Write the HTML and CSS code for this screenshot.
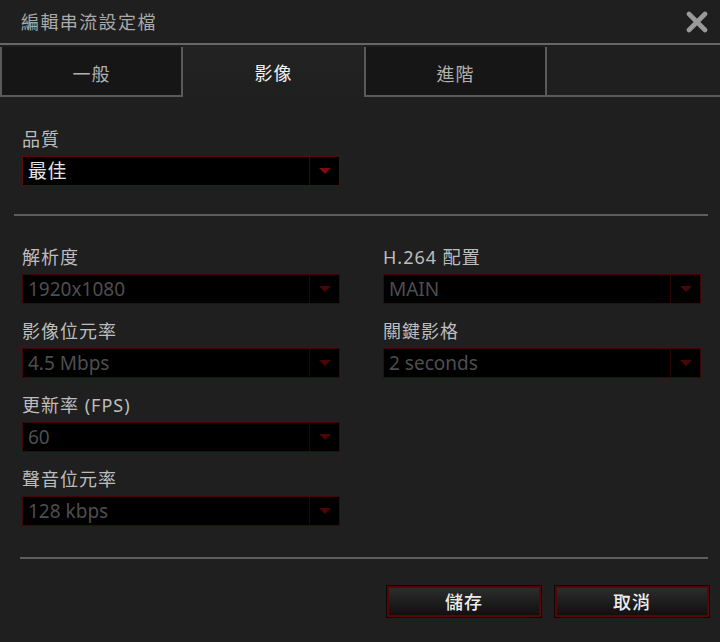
FILE: index.html
```html
<!DOCTYPE html>
<html lang="zh-Hant">
<head>
<meta charset="utf-8">
<title>編輯串流設定檔</title>
<link rel="stylesheet" href="styles.css">
</head>
<body>
<div class="dialog">
  <header class="titlebar">
    <span class="title">編輯串流設定檔</span>
    <button class="close" aria-label="close">
      <svg width="22" height="22" viewBox="0 0 22 22"><path d="M3 3 L19 19 M19 3 L3 19" stroke="#9a9a9a" stroke-width="4.6" stroke-linecap="round" fill="none"/></svg>
    </button>
  </header>

  <nav class="tabs">
    <div class="tab tab-first">一般</div>
    <div class="tab active">影像</div>
    <div class="tab">進階</div>
    <div class="tab-rest"></div>
  </nav>

  <section class="quality">
    <div class="field">
      <div class="label">品質</div>
      <div class="select enabled"><span class="value">最佳</span><span class="arrow"><i></i></span></div>
    </div>
  </section>

  <div class="divider divider-top"></div>

  <section class="grid">
    <div class="col">
      <div class="field">
        <div class="label">解析度</div>
        <div class="select"><span class="value">1920x1080</span><span class="arrow"><i></i></span></div>
      </div>
      <div class="field">
        <div class="label">影像位元率</div>
        <div class="select"><span class="value">4.5 Mbps</span><span class="arrow"><i></i></span></div>
      </div>
      <div class="field">
        <div class="label">更新率 (FPS)</div>
        <div class="select"><span class="value">60</span><span class="arrow"><i></i></span></div>
      </div>
      <div class="field">
        <div class="label">聲音位元率</div>
        <div class="select"><span class="value">128 kbps</span><span class="arrow"><i></i></span></div>
      </div>
    </div>
    <div class="col">
      <div class="field">
        <div class="label">H.264 配置</div>
        <div class="select"><span class="value">MAIN</span><span class="arrow"><i></i></span></div>
      </div>
      <div class="field">
        <div class="label">關鍵影格</div>
        <div class="select"><span class="value">2 seconds</span><span class="arrow"><i></i></span></div>
      </div>
    </div>
  </section>

  <div class="divider divider-bottom"></div>

  <footer class="actions">
    <button class="btn">儲存</button>
    <button class="btn">取消</button>
  </footer>
</div>
</body>
</html>
```
FILE: styles.css
```css
* { box-sizing: border-box; }
html, body {
  margin: 0;
  padding: 0;
  background: #1f1f1f;
}
body {
  width: 720px;
  height: 642px;
  overflow: hidden;
  font-family: "Noto Sans", "Noto Sans CJK TC", sans-serif;
  color: #b8b8b8;
}
.dialog {
  width: 720px;
  height: 642px;
}
.titlebar {
  height: 45px;
  border-bottom: 2px solid #676767;
  display: flex;
  align-items: center;
  justify-content: space-between;
  padding: 0 12px 0 21px;
}
.title {
  font-size: 18px;
  letter-spacing: 1.4px;
  color: #a9a9a9;
  line-height: 22px;
}
.close {
  background: none;
  border: 0;
  padding: 0;
  width: 22px;
  height: 22px;
  display: flex;
}
.tabs {
  display: flex;
  height: 52px;
  border-bottom: 2px solid #5a5a5a;
}
.tab {
  width: 183px;
  margin-top: 2px;
  background: #161616;
  border-left: 2px solid #5a5a5a;
  border-right: 2px solid #5a5a5a;
  display: flex;
  align-items: center;
  justify-content: center;
  padding-top: 3px;
  font-size: 18px;
  letter-spacing: 1px;
  color: #b0b0b0;
}
.tab-first {
  border-left-width: 2px;
}
.tab.active {
  width: 181px;
  margin-top: 0;
  margin-bottom: -2px;
  background: linear-gradient(#232323, #1f1f1f);
  border: 0;
  color: #f2f2f2;
  padding-top: 1px;
}
.tab-rest {
  flex: 1;
}
.quality {
  padding: 31px 22px 0;
}
.quality .field {
  width: 318px;
}
.field {
  display: flex;
  flex-direction: column;
}
.label {
  font-size: 18px;
  line-height: 22px;
  letter-spacing: 1px;
  color: #bdbdbd;
  margin-bottom: 6px;
}
.select {
  display: flex;
  height: 30px;
  background: #000;
  border: 1px solid #3f0606;
}
.select .value {
  flex: 1;
  padding-left: 5px;
  font-size: 19px;
  line-height: 28px;
  color: #4e4e4e;
}
.select .arrow {
  width: 30px;
  border-left: 1px solid #2c0404;
  display: flex;
  align-items: center;
  justify-content: center;
}
.select .arrow i {
  display: block;
  width: 0;
  height: 0;
  border-left: 6px solid transparent;
  border-right: 6px solid transparent;
  border-top: 6px solid #4a0606;
}
.select.enabled {
  border-color: #5c0909;
}
.select.enabled .value {
  color: #e4e4e4;
  letter-spacing: 0.5px;
}
.select.enabled .arrow {
  border-left-color: #3e0606;
}
.select.enabled .arrow i {
  border-top-color: #7e0c0c;
}
.divider {
  height: 2px;
  background: #5e5e5e;
}
.divider-top {
  margin: 28px 12px 0 14px;
}
.divider-bottom {
  margin: 31px 12px 0 20px;
}
.grid {
  display: grid;
  grid-template-columns: 318px 318px;
  column-gap: 43px;
  padding: 30px 0 0 22px;
  align-items: start;
}
.col {
  display: flex;
  flex-direction: column;
  gap: 16px;
}
.actions {
  display: flex;
  justify-content: flex-end;
  gap: 14px;
  padding: 27px 11px 0 0;
}
.btn {
  width: 154px;
  height: 31px;
  border: 2px solid #5a0505;
  outline: 1px solid #0a0a0a;
  background: linear-gradient(#2c2c2c, #101010);
  color: #ececec;
  font-family: "Noto Sans CJK TC", sans-serif;
  font-size: 18px;
  letter-spacing: 1px;
  font-weight: 500;
  padding: 0;
  line-height: 27px;
}
```
